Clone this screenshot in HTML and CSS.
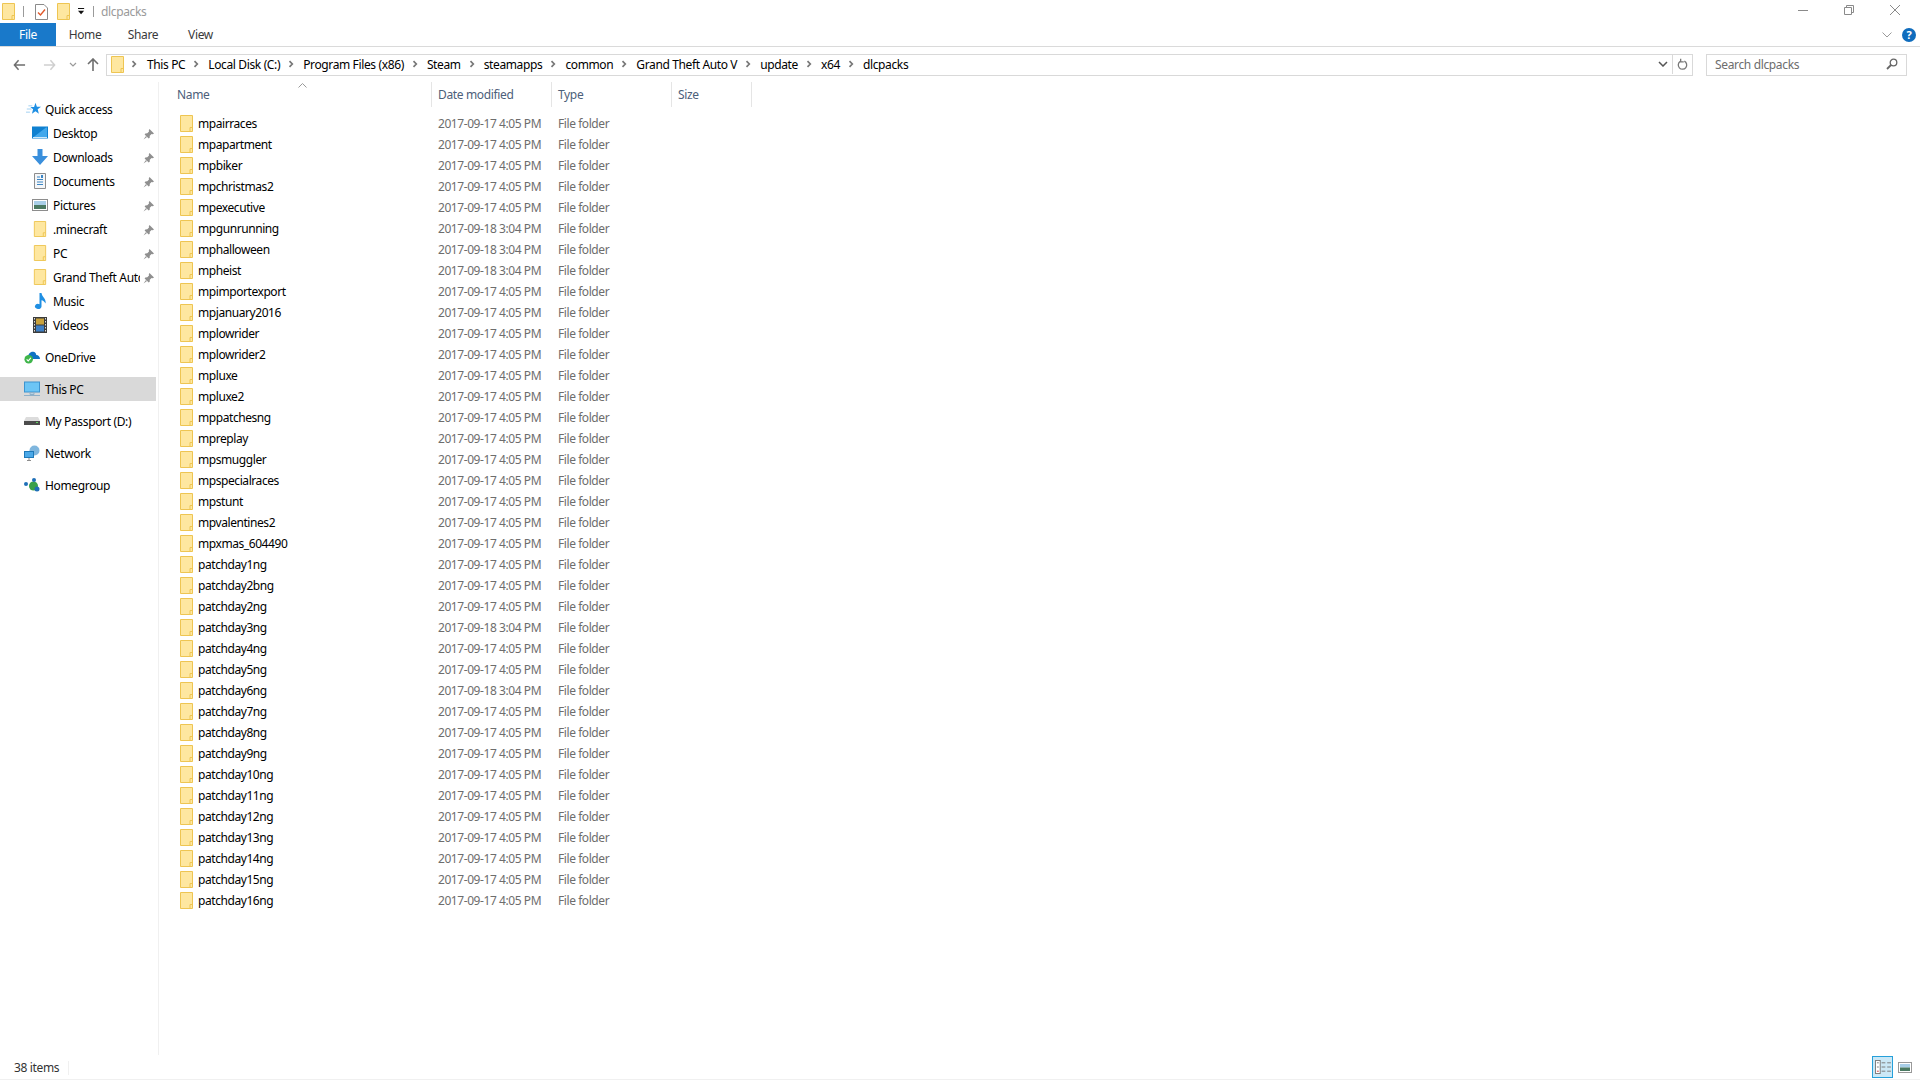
FILE: index.html
```html
<!DOCTYPE html>
<html lang="en">
<head>
    <meta charset="UTF-8">
    <meta name="viewport" content="width=device-width, initial-scale=1.0">
    <title>dlcpacks</title>
    <link rel="stylesheet" href="styles.css">
</head>
<body>
    <svg class="defs" width="0" height="0">
        <symbol id="folder" viewBox="0 0 13 17">
            <path d="M.5.5H12.5V16.5H.5Z" fill="#fee7a0" stroke="#eec552"/>
            <path d="M10 16V12.5H12" fill="none" stroke="#eec552"/>
        </symbol>
        <symbol id="pin" viewBox="0 0 11 11">
            <path d="M6.500 0L11 4.500 9.800 5.200 8.600 5 6.800 6.800 6.700 8.700 5.700 9.500 1.600 5.400 2.400 4.400 4.300 4.300 6 2.500 5.800 1.200Z" fill="#8f8f8f"/>
            <path d="M3 7L.5 10.500 4 8Z" fill="#8f8f8f"/>
        </symbol>
        <symbol id="chev" viewBox="0 0 6 8">
            <path d="M1.500 1.200L4.300 4 1.500 6.800" fill="none" stroke="#777" stroke-width="1.700"/>
        </symbol>
    </svg>

    <div class="window">
        <div class="titlebar">
            <svg class="qat-folder"><use href="#folder"/></svg>
            <span class="qat-sep"></span>
            <svg class="qat-doc" viewBox="0 0 13 16">
                <path d="M.5.5H9L12.5 4V15.5H.5Z" fill="#fff" stroke="#8a8a8a"/>
                <path d="M3 8.500L5.500 11 10 5.500" fill="none" stroke="#e0582a" stroke-width="1.400"/>
            </svg>
            <svg class="qat-folder qat-second"><use href="#folder"/></svg>
            <svg class="qat-drop" viewBox="0 0 8 8">
                <path d="M0 0H7V1H0ZM0 3H7L3.500 7Z" fill="#111"/>
            </svg>
            <span class="qat-sep qat-sep2"></span>
            <span class="title-text">dlcpacks</span>
            <div class="win-buttons">
                <svg class="win-btn" viewBox="0 0 12 12"><path d="M1 6.500H11" stroke="#8a8a8a"/></svg>
                <svg class="win-btn" viewBox="0 0 12 12"><path d="M1.500 3.500H8.500V10.500H1.500ZM3.500 3V1.500H10.500V8.500H9" fill="none" stroke="#8a8a8a"/></svg>
                <svg class="win-btn" viewBox="0 0 12 12"><path d="M1 1L11 11M11 1L1 11" stroke="#8a8a8a"/></svg>
            </div>
        </div>

        <div class="ribbon">
            <div class="tab tab-file">File</div>
            <div class="tab tab-home">Home</div>
            <div class="tab tab-share">Share</div>
            <div class="tab tab-view">View</div>
            <svg class="ribbon-collapse" viewBox="0 0 10 6"><path d="M.5 .5L5 5 9.500 .5" fill="none" stroke="#9a9a9a"/></svg>
            <div class="help">?</div>
        </div>

        <div class="navbar">
            <svg class="nav-icon nav-back" viewBox="0 0 14 12"><path d="M6 1L1.500 6 6 11M2 6H13" fill="none" stroke="#6e6e6e" stroke-width="1.600"/></svg>
            <svg class="nav-icon nav-forward" viewBox="0 0 14 12"><path d="M8 1L12.500 6 8 11M12 6H1" fill="none" stroke="#cfcfcf" stroke-width="1.600"/></svg>
            <svg class="nav-drop" viewBox="0 0 8 5"><path d="M1 1L4 4 7 1" fill="none" stroke="#9a9a9a" stroke-width="1.200"/></svg>
            <svg class="nav-icon nav-up" viewBox="0 0 12 14"><path d="M1 6L6 1 11 6M6 1.500V13" fill="none" stroke="#6e6e6e" stroke-width="1.600"/></svg>

            <div class="address">
                <svg class="addr-folder"><use href="#folder"/></svg>
                <svg class="crumb-chev first"><use href="#chev"/></svg>
                <span class="crumb">This PC</span><svg class="crumb-chev"><use href="#chev"/></svg>
                <span class="crumb">Local Disk (C:)</span><svg class="crumb-chev"><use href="#chev"/></svg>
                <span class="crumb">Program Files (x86)</span><svg class="crumb-chev"><use href="#chev"/></svg>
                <span class="crumb">Steam</span><svg class="crumb-chev"><use href="#chev"/></svg>
                <span class="crumb">steamapps</span><svg class="crumb-chev"><use href="#chev"/></svg>
                <span class="crumb">common</span><svg class="crumb-chev"><use href="#chev"/></svg>
                <span class="crumb">Grand Theft Auto V</span><svg class="crumb-chev"><use href="#chev"/></svg>
                <span class="crumb">update</span><svg class="crumb-chev"><use href="#chev"/></svg>
                <span class="crumb">x64</span><svg class="crumb-chev"><use href="#chev"/></svg>
                <span class="crumb">dlcpacks</span>
                <svg class="addr-drop" viewBox="0 0 10 6"><path d="M1 1L5 5 9 1" fill="none" stroke="#555" stroke-width="1.500"/></svg>
                <div class="addr-refresh">
                    <svg viewBox="0 0 12 14" width="11" height="13"><path d="M8 3.400A4.600 4.600 0 1 1 3.600 3.600M4 .8V4.200H7.400" fill="none" stroke="#777" stroke-width="1.400"/></svg>
                </div>
            </div>

            <div class="search">
                <span>Search dlcpacks</span>
                <svg viewBox="0 0 12 12" width="12" height="12"><circle cx="7.500" cy="4.500" r="3.300" fill="none" stroke="#666" stroke-width="1.300"/><path d="M5 7L1 11" stroke="#666" stroke-width="1.800"/></svg>
            </div>
        </div>

        <div class="main">
            <nav class="sidebar">
                <div class="side-group">
                    <div class="side-item top">
                        <svg class="side-icon star" viewBox="0 0 19 16"><path d="M12 0L13.800 5H19L14.800 8.300 16.300 14 12 10.800 7.500 14 9 8.300 5.500 5.600H10.200Z" fill="#1f8fe3"/><path d="M3 4H8M1 8H7M0 12H5" stroke="#8cc6ef"/></svg>
                        <span>Quick access</span>
                    </div>
                    <div class="side-item child">
                        <svg class="side-icon" viewBox="0 0 16 13"><rect width="16" height="12" fill="#0f80d0"/><path d="M1 11L14 1H15V10.500H1Z" fill="#42a8ec"/><path d="M1 11H15" stroke="#cde8fa"/></svg>
                        <span>Desktop</span>
                        <svg class="pin"><use href="#pin"/></svg>
                    </div>
                    <div class="side-item child">
                        <svg class="side-icon" viewBox="0 0 16 16"><path d="M5.500 0H10.500V7H16L8 16 0 7H5.500Z" fill="#3a8fdc"/></svg>
                        <span>Downloads</span>
                        <svg class="pin"><use href="#pin"/></svg>
                    </div>
                    <div class="side-item child">
                        <svg class="side-icon" viewBox="0 0 16 16"><path d="M2.500 .5H13.500V15.500H2.500Z" fill="#f4f6f8" stroke="#8d8d8d"/><path d="M5 4H8M5 6.500H11M5 9H11M5 11.500H11" stroke="#3b85c4"/><path d="M9 2H11V5H9Z" fill="#3b85c4"/></svg>
                        <span>Documents</span>
                        <svg class="pin"><use href="#pin"/></svg>
                    </div>
                    <div class="side-item child">
                        <svg class="side-icon" viewBox="0 0 16 12"><rect x=".5" y=".5" width="15" height="11" fill="#fff" stroke="#8d8d8d"/><rect x="2" y="2" width="12" height="4" fill="#a9cfe8"/><rect x="2" y="6" width="12" height="4" fill="#4b7a62"/></svg>
                        <span>Pictures</span>
                        <svg class="pin"><use href="#pin"/></svg>
                    </div>
                    <div class="side-item child">
                        <svg class="side-icon"><use href="#folder"/></svg>
                        <span>.minecraft</span>
                        <svg class="pin"><use href="#pin"/></svg>
                    </div>
                    <div class="side-item child">
                        <svg class="side-icon"><use href="#folder"/></svg>
                        <span>PC</span>
                        <svg class="pin"><use href="#pin"/></svg>
                    </div>
                    <div class="side-item child">
                        <svg class="side-icon"><use href="#folder"/></svg>
                        <span class="clipped">Grand Theft Auto V</span>
                        <svg class="pin"><use href="#pin"/></svg>
                    </div>
                    <div class="side-item child">
                        <svg class="side-icon" viewBox="0 0 16 16"><path d="M7.500 0H9.500C10 4 14.500 5.500 13.500 10.500 12.500 8.500 11 7.500 9.500 7.200V13.500A3.300 2.500 0 1 1 7.500 11.200Z" fill="#1f8fe3"/></svg>
                        <span>Music</span>
                    </div>
                    <div class="side-item child">
                        <svg class="side-icon" viewBox="0 0 16 16"><rect x="1" width="14" height="16" fill="#3c3c3c"/><rect x="4" y="1.500" width="8" height="6" fill="#c9a23c"/><rect x="4" y="8.500" width="8" height="6" fill="#3f7fc4"/><path d="M2.500 1V15M13.500 1V15" stroke="#ddd" stroke-dasharray="1.500 1.500"/></svg>
                        <span>Videos</span>
                    </div>
                </div>
                <div class="side-item top">
                    <svg class="side-icon" viewBox="0 0 17 14"><path d="M4 8C4 4 7 1 10 1.500 12.500 2 13 4 13 5 15.500 5 17 7 17 9H6Z" fill="#0f73c4"/><circle cx="5" cy="9.500" r="4.500" fill="#3fb54a"/><path d="M2.800 9.500L4.500 11.200 7.300 8" fill="none" stroke="#fff" stroke-width="1.200"/></svg>
                    <span>OneDrive</span>
                </div>
                <div class="side-item top selected">
                    <svg class="side-icon" viewBox="0 0 16 15"><rect x=".5" y=".5" width="15" height="10" fill="#6cc5f5" stroke="#3c94d0"/><path d="M6 11H10V13H6ZM0 14H16" stroke="#8fb0c8" fill="#b9d2e3"/></svg>
                    <span>This PC</span>
                </div>
                <div class="side-item top">
                    <svg class="side-icon" viewBox="0 0 16 8"><path d="M2 0H14L16 4H0Z" fill="#dcdcdc"/><rect y="4" width="16" height="4" fill="#4b4b4b"/><rect x="12" y="5" width="2" height="1" fill="#5fd35f"/></svg>
                    <span>My Passport (D:)</span>
                </div>
                <div class="side-item top">
                    <svg class="side-icon" viewBox="0 0 16 16"><circle cx="10.500" cy="5.500" r="5" fill="#7fb6de"/><rect x=".5" y="6.500" width="9" height="6" fill="#4aa8e8" stroke="#1e78b8"/><path d="M5 13V15M3 15.500H7" stroke="#8d8d8d"/></svg>
                    <span>Network</span>
                </div>
                <div class="side-item top">
                    <svg class="side-icon" viewBox="0 0 16 14"><circle cx="2" cy="6" r="2" fill="#1f6fb8"/><circle cx="9.500" cy="8" r="4.500" fill="#3aa04a"/><circle cx="10" cy="2" r="2" fill="#1f6fb8"/><circle cx="13" cy="11" r="2.500" fill="#1f6fb8"/></svg>
                    <span>Homegroup</span>
                </div>
            </nav>

            <section class="files">
                <div class="col-head">
                    <svg class="sort-caret" viewBox="0 0 9 5"><path d="M.5 4.500L4.500 .5 8.500 4.500" fill="none" stroke="#9a9a9a"/></svg>
                    <div class="col col-name">Name</div>
                    <div class="col col-date">Date modified</div>
                    <div class="col col-type">Type</div>
                    <div class="col col-size">Size</div>
                </div>
                <div class="rows">
                    <div class="row"><svg class="row-icon"><use href="#folder"/></svg><span class="name">mpairraces</span><span class="date">2017-09-17 4:05 PM</span><span class="type">File folder</span></div>
                    <div class="row"><svg class="row-icon"><use href="#folder"/></svg><span class="name">mpapartment</span><span class="date">2017-09-17 4:05 PM</span><span class="type">File folder</span></div>
                    <div class="row"><svg class="row-icon"><use href="#folder"/></svg><span class="name">mpbiker</span><span class="date">2017-09-17 4:05 PM</span><span class="type">File folder</span></div>
                    <div class="row"><svg class="row-icon"><use href="#folder"/></svg><span class="name">mpchristmas2</span><span class="date">2017-09-17 4:05 PM</span><span class="type">File folder</span></div>
                    <div class="row"><svg class="row-icon"><use href="#folder"/></svg><span class="name">mpexecutive</span><span class="date">2017-09-17 4:05 PM</span><span class="type">File folder</span></div>
                    <div class="row"><svg class="row-icon"><use href="#folder"/></svg><span class="name">mpgunrunning</span><span class="date">2017-09-18 3:04 PM</span><span class="type">File folder</span></div>
                    <div class="row"><svg class="row-icon"><use href="#folder"/></svg><span class="name">mphalloween</span><span class="date">2017-09-18 3:04 PM</span><span class="type">File folder</span></div>
                    <div class="row"><svg class="row-icon"><use href="#folder"/></svg><span class="name">mpheist</span><span class="date">2017-09-18 3:04 PM</span><span class="type">File folder</span></div>
                    <div class="row"><svg class="row-icon"><use href="#folder"/></svg><span class="name">mpimportexport</span><span class="date">2017-09-17 4:05 PM</span><span class="type">File folder</span></div>
                    <div class="row"><svg class="row-icon"><use href="#folder"/></svg><span class="name">mpjanuary2016</span><span class="date">2017-09-17 4:05 PM</span><span class="type">File folder</span></div>
                    <div class="row"><svg class="row-icon"><use href="#folder"/></svg><span class="name">mplowrider</span><span class="date">2017-09-17 4:05 PM</span><span class="type">File folder</span></div>
                    <div class="row"><svg class="row-icon"><use href="#folder"/></svg><span class="name">mplowrider2</span><span class="date">2017-09-17 4:05 PM</span><span class="type">File folder</span></div>
                    <div class="row"><svg class="row-icon"><use href="#folder"/></svg><span class="name">mpluxe</span><span class="date">2017-09-17 4:05 PM</span><span class="type">File folder</span></div>
                    <div class="row"><svg class="row-icon"><use href="#folder"/></svg><span class="name">mpluxe2</span><span class="date">2017-09-17 4:05 PM</span><span class="type">File folder</span></div>
                    <div class="row"><svg class="row-icon"><use href="#folder"/></svg><span class="name">mppatchesng</span><span class="date">2017-09-17 4:05 PM</span><span class="type">File folder</span></div>
                    <div class="row"><svg class="row-icon"><use href="#folder"/></svg><span class="name">mpreplay</span><span class="date">2017-09-17 4:05 PM</span><span class="type">File folder</span></div>
                    <div class="row"><svg class="row-icon"><use href="#folder"/></svg><span class="name">mpsmuggler</span><span class="date">2017-09-17 4:05 PM</span><span class="type">File folder</span></div>
                    <div class="row"><svg class="row-icon"><use href="#folder"/></svg><span class="name">mpspecialraces</span><span class="date">2017-09-17 4:05 PM</span><span class="type">File folder</span></div>
                    <div class="row"><svg class="row-icon"><use href="#folder"/></svg><span class="name">mpstunt</span><span class="date">2017-09-17 4:05 PM</span><span class="type">File folder</span></div>
                    <div class="row"><svg class="row-icon"><use href="#folder"/></svg><span class="name">mpvalentines2</span><span class="date">2017-09-17 4:05 PM</span><span class="type">File folder</span></div>
                    <div class="row"><svg class="row-icon"><use href="#folder"/></svg><span class="name">mpxmas_604490</span><span class="date">2017-09-17 4:05 PM</span><span class="type">File folder</span></div>
                    <div class="row"><svg class="row-icon"><use href="#folder"/></svg><span class="name">patchday1ng</span><span class="date">2017-09-17 4:05 PM</span><span class="type">File folder</span></div>
                    <div class="row"><svg class="row-icon"><use href="#folder"/></svg><span class="name">patchday2bng</span><span class="date">2017-09-17 4:05 PM</span><span class="type">File folder</span></div>
                    <div class="row"><svg class="row-icon"><use href="#folder"/></svg><span class="name">patchday2ng</span><span class="date">2017-09-17 4:05 PM</span><span class="type">File folder</span></div>
                    <div class="row"><svg class="row-icon"><use href="#folder"/></svg><span class="name">patchday3ng</span><span class="date">2017-09-18 3:04 PM</span><span class="type">File folder</span></div>
                    <div class="row"><svg class="row-icon"><use href="#folder"/></svg><span class="name">patchday4ng</span><span class="date">2017-09-17 4:05 PM</span><span class="type">File folder</span></div>
                    <div class="row"><svg class="row-icon"><use href="#folder"/></svg><span class="name">patchday5ng</span><span class="date">2017-09-17 4:05 PM</span><span class="type">File folder</span></div>
                    <div class="row"><svg class="row-icon"><use href="#folder"/></svg><span class="name">patchday6ng</span><span class="date">2017-09-18 3:04 PM</span><span class="type">File folder</span></div>
                    <div class="row"><svg class="row-icon"><use href="#folder"/></svg><span class="name">patchday7ng</span><span class="date">2017-09-17 4:05 PM</span><span class="type">File folder</span></div>
                    <div class="row"><svg class="row-icon"><use href="#folder"/></svg><span class="name">patchday8ng</span><span class="date">2017-09-17 4:05 PM</span><span class="type">File folder</span></div>
                    <div class="row"><svg class="row-icon"><use href="#folder"/></svg><span class="name">patchday9ng</span><span class="date">2017-09-17 4:05 PM</span><span class="type">File folder</span></div>
                    <div class="row"><svg class="row-icon"><use href="#folder"/></svg><span class="name">patchday10ng</span><span class="date">2017-09-17 4:05 PM</span><span class="type">File folder</span></div>
                    <div class="row"><svg class="row-icon"><use href="#folder"/></svg><span class="name">patchday11ng</span><span class="date">2017-09-17 4:05 PM</span><span class="type">File folder</span></div>
                    <div class="row"><svg class="row-icon"><use href="#folder"/></svg><span class="name">patchday12ng</span><span class="date">2017-09-17 4:05 PM</span><span class="type">File folder</span></div>
                    <div class="row"><svg class="row-icon"><use href="#folder"/></svg><span class="name">patchday13ng</span><span class="date">2017-09-17 4:05 PM</span><span class="type">File folder</span></div>
                    <div class="row"><svg class="row-icon"><use href="#folder"/></svg><span class="name">patchday14ng</span><span class="date">2017-09-17 4:05 PM</span><span class="type">File folder</span></div>
                    <div class="row"><svg class="row-icon"><use href="#folder"/></svg><span class="name">patchday15ng</span><span class="date">2017-09-17 4:05 PM</span><span class="type">File folder</span></div>
                    <div class="row"><svg class="row-icon"><use href="#folder"/></svg><span class="name">patchday16ng</span><span class="date">2017-09-17 4:05 PM</span><span class="type">File folder</span></div>
                </div>
            </section>
        </div>

        <div class="statusbar">
            <span class="count">38 items</span>
            <div class="view-buttons">
                <div class="view-btn active">
                    <svg viewBox="0 0 17 15" width="16" height="14">
                        <rect x=".5" y=".5" width="5" height="14" fill="#fff" stroke="#777"/>
                        <path d="M2 3H4M2 7.500H4" stroke="#777"/><path d="M2 12H4" stroke="#c33"/>
                        <path d="M7 3H11M13 3H17M7 7.500H11M13 7.500H17M7 12H11M13 12H17" stroke="#777"/>
                    </svg>
                </div>
                <div class="view-btn large">
                    <svg viewBox="0 0 14 11" width="14" height="11">
                        <rect x=".5" y=".5" width="13" height="10" fill="#fff" stroke="#999"/>
                        <rect x="2" y="2" width="10" height="3.500" fill="#a9cfe8"/><rect x="2" y="5.500" width="10" height="3.500" fill="#4b7a62"/>
                    </svg>
                </div>
            </div>
        </div>
    </div>
</body>
</html>
```

FILE: styles.css
```css
* {
    box-sizing: border-box;
}
html, body {
    margin: 0;
    height: 100%;
    background: #fff;
}
body {
    font-family: "Noto Sans", "Open Sans", sans-serif;
    font-size: 12px;
    letter-spacing: -0.35px;
    color: #000;
    overflow: hidden;
}
.defs {
    display: block;
    height: 0;
}
svg {
    display: block;
    flex: none;
}
.window {
    display: flex;
    flex-direction: column;
    height: 1080px;
}

/* title bar */
.titlebar {
    display: flex;
    align-items: center;
    height: 23px;
    padding-left: 2px;
    flex: none;
}
.qat-folder {
    width: 13px;
    height: 17px;
}
.qat-second {
    margin-left: 9px;
}
.qat-sep {
    width: 1px;
    height: 11px;
    margin-left: 8px;
    background: #9a9a9a;
}
.qat-doc {
    width: 13px;
    height: 16px;
    margin-left: 11px;
}
.qat-drop {
    width: 7px;
    height: 7px;
    margin-left: 8px;
}
.qat-sep2 {
    margin-left: 8px;
}
.title-text {
    margin-left: 7px;
    color: #9a9a9a;
}
.win-buttons {
    display: flex;
    gap: 34px;
    margin-left: auto;
    margin-right: 19px;
    margin-bottom: 3px;
}
.win-btn {
    width: 12px;
    height: 12px;
}

/* ribbon tabs */
.ribbon {
    display: flex;
    align-items: center;
    height: 24px;
    flex: none;
    border-bottom: 1px solid #dadada;
    color: #3a3a3a;
}
.tab {
    height: 23px;
    line-height: 23px;
    text-align: center;
}
.tab-file {
    width: 56px;
    background: #1979ca;
    color: #fff;
}
.tab-home {
    width: 58px;
}
.tab-share {
    width: 58px;
}
.tab-view {
    width: 57px;
}
.ribbon-collapse {
    width: 10px;
    height: 6px;
    margin-left: auto;
    margin-right: 10px;
}
.help {
    width: 14px;
    height: 14px;
    margin-right: 4px;
    border-radius: 50%;
    background: #0f6cbd;
    color: #fff;
    font-size: 11px;
    font-weight: 700;
    line-height: 14px;
    text-align: center;
}

/* back / forward / address / search */
.navbar {
    display: flex;
    align-items: center;
    height: 35px;
    flex: none;
}
.nav-icon {
    height: 12px;
}
.nav-back {
    width: 13px;
    margin-left: 13px;
}
.nav-forward {
    width: 13px;
    margin-left: 17px;
}
.nav-drop {
    width: 8px;
    height: 5px;
    margin-left: 13px;
}
.nav-up {
    width: 12px;
    height: 14px;
    margin-left: 10px;
}
.address {
    display: flex;
    align-items: center;
    width: 1587px;
    height: 22px;
    margin-left: 7px;
    padding: 0 0 1px 4px;
    border: 1px solid #d9d9d9;
}
.addr-folder {
    width: 13px;
    height: 17px;
}
.crumb {
    letter-spacing: -0.37px;
}
.crumb-chev {
    width: 6px;
    height: 8px;
    margin: 0 9px 0 8px;
}
.crumb-chev.first {
    margin: 0 10px 0 7px;
}
.addr-drop {
    width: 10px;
    height: 6px;
    margin-left: auto;
    margin-right: 4px;
}
.addr-refresh {
    display: flex;
    align-items: center;
    justify-content: center;
    width: 20px;
    height: 20px;
    border-left: 1px solid #d9d9d9;
}
.search {
    display: flex;
    align-items: center;
    justify-content: space-between;
    width: 201px;
    height: 22px;
    margin-left: 13px;
    padding: 0 8px 1px;
    border: 1px solid #d9d9d9;
    color: #6d6d6d;
}

/* main area */
.main {
    display: flex;
    flex: 1;
    min-height: 0;
}
.sidebar {
    display: flex;
    flex-direction: column;
    gap: 8px;
    width: 159px;
    padding-top: 15px;
    border-right: 1px solid #f0f0f0;
    flex: none;
}
.side-group {
    display: flex;
    flex-direction: column;
}
.side-item {
    display: flex;
    align-items: center;
    position: relative;
    height: 24px;
    width: 156px;
}
.side-item.top {
    padding-left: 24px;
}
.side-item.child {
    padding-left: 32px;
}
.side-item.selected {
    background: #d9d9d9;
}
.side-icon {
    width: 16px;
    height: 16px;
    margin-right: 5px;
}
.side-icon.star {
    width: 15px;
    margin-left: 2px;
    margin-right: 4px;
}
.clipped {
    width: 87px;
    overflow: hidden;
    white-space: nowrap;
}
.pin {
    position: absolute;
    left: 143px;
    top: 8px;
    width: 11px;
    height: 11px;
}

/* file list */
.files {
    flex: 1;
    min-width: 0;
}
.col-head {
    display: flex;
    position: relative;
    height: 25px;
    color: #4c607a;
}
.sort-caret {
    position: absolute;
    left: 139px;
    top: 1px;
    width: 9px;
    height: 5px;
}
.col {
    height: 25px;
    padding-left: 6px;
    line-height: 25px;
    border-right: 1px solid #e5e5e5;
}
.col-name {
    width: 273px;
    padding-left: 18px;
}
.col-date {
    width: 120px;
}
.col-type {
    width: 120px;
}
.col-size {
    width: 80px;
}
.rows {
    margin-top: 6px;
    letter-spacing: -0.43px;
}
.row {
    display: flex;
    align-items: center;
    height: 21px;
    padding-left: 21px;
}
.row-icon {
    width: 13px;
    height: 17px;
}
.name {
    width: 245px;
    padding-left: 5px;
}
.date {
    width: 120px;
    color: #6d6d6d;
}
.type {
    width: 120px;
    color: #6d6d6d;
}

/* status bar */
.statusbar {
    display: flex;
    align-items: center;
    justify-content: space-between;
    height: 25px;
    flex: none;
    border-bottom: 1px solid #f0f0f0;
    color: #333;
}
.count {
    width: 69px;
    margin-top: 2px;
    padding-left: 14px;
    line-height: 14px;
    border-right: 1px solid #f0f0f0;
}
.view-buttons {
    display: flex;
    align-items: center;
    gap: 5px;
    margin-right: 8px;
}
.view-btn {
    display: flex;
    align-items: center;
    justify-content: center;
    height: 22px;
}
.view-btn.active {
    width: 21px;
    background: #cbe8f6;
    border: 1px solid #26a0da;
}
.view-btn.large {
    width: 14px;
}
```
